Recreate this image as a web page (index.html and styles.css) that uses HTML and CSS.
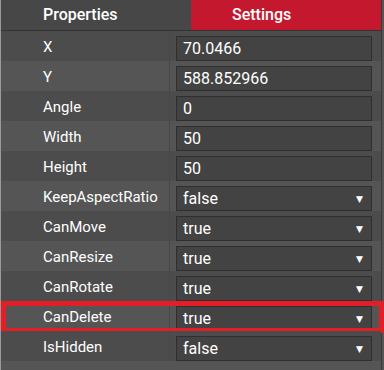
FILE: index.html
```html
<!DOCTYPE html>
<html>
<head>
    <meta name="viewport" content="width=device-width, initial-scale=1.0">
    <link rel="stylesheet" href="styles.css">
</head>
<body>
    <div class="panel">
        <div class="tabs">
            <div class="tab">Properties</div>
            <div class="tab tab-active">Settings</div>
        </div>
        <div class="rows">
            <div class="row">
                <div class="label">X</div>
                <div class="cell"><div class="field">70.0466</div></div>
            </div>
            <div class="row">
                <div class="label">Y</div>
                <div class="cell"><div class="field">588.852966</div></div>
            </div>
            <div class="row">
                <div class="label">Angle</div>
                <div class="cell"><div class="field">0</div></div>
            </div>
            <div class="row">
                <div class="label">Width</div>
                <div class="cell"><div class="field">50</div></div>
            </div>
            <div class="row">
                <div class="label">Height</div>
                <div class="cell"><div class="field">50</div></div>
            </div>
            <div class="row">
                <div class="label">KeepAspectRatio</div>
                <div class="cell"><div class="field select">false<span class="arrow">▼</span></div></div>
            </div>
            <div class="row">
                <div class="label">CanMove</div>
                <div class="cell"><div class="field select">true<span class="arrow">▼</span></div></div>
            </div>
            <div class="row">
                <div class="label">CanResize</div>
                <div class="cell"><div class="field select">true<span class="arrow">▼</span></div></div>
            </div>
            <div class="row">
                <div class="label">CanRotate</div>
                <div class="cell"><div class="field select">true<span class="arrow">▼</span></div></div>
            </div>
            <div class="row row-marked">
                <div class="label">CanDelete</div>
                <div class="cell"><div class="field select">true<span class="arrow">▼</span></div></div>
                <div class="mark"></div>
            </div>
            <div class="row">
                <div class="label">IsHidden</div>
                <div class="cell"><div class="field select">false<span class="arrow">▼</span></div></div>
            </div>
        </div>
    </div>
</body>
</html>
```

FILE: styles.css
```css
body {
    margin: 0;
    background-color: #555555;
    font-family: Roboto, "Liberation Sans", sans-serif;
    color: #ffffff;
}

.panel {
    width: 382px;
    height: 370px;
    border-left: 1px solid #9a9a9a;
    border-right: 1px solid #3a3a3a;
    box-sizing: border-box;
    background: #555555;
}

.tabs {
    display: flex;
    height: 30px;
    background: #474747;
    border-bottom: 1px solid #333333;
}

.tab {
    width: 190px;
    padding-left: 42px;
    box-sizing: border-box;
    font-size: 16px;
    font-weight: 500;
    line-height: 30px;
}

.tab-active {
    flex: 1;
    padding-left: 41px;
    background: #c4182f;
}

.row {
    display: flex;
    height: 30px;
    position: relative;
    background: #4c4c4c;
}

.row:nth-child(even) {
    background: #555555;
}

.label {
    width: 169px;
    padding-left: 42px;
    padding-top: 1px;
    box-sizing: border-box;
    font-size: 15px;
    line-height: 30px;
    border-right: 1px solid #484848;
}

.cell {
    flex: 1;
    padding: 5px 9px 0 6px;
}

.field {
    display: flex;
    align-items: center;
    height: 25px;
    padding-left: 6px;
    box-sizing: border-box;
    background: #434343;
    border: 1px solid #2f2f2f;
    font-size: 16px;
}

.arrow {
    margin-left: auto;
    margin-right: 8px;
    font-size: 9px;
    font-family: "DejaVu Sans", sans-serif;
}

.mark {
    position: absolute;
    left: 0;
    top: 0;
    width: 383px;
    height: 32px;
    border: 5px solid #e41e26;
    box-sizing: border-box;
}
```
